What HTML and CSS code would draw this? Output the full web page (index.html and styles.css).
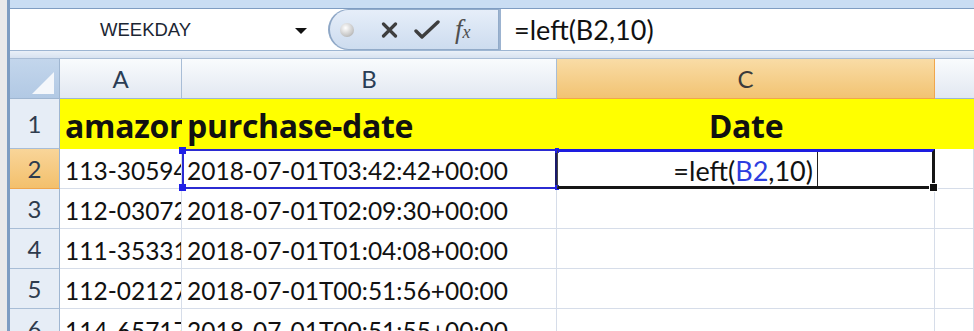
FILE: index.html
```html
<!DOCTYPE HTML>
<html>
<head>
    <title>Book1 - left(B2,10)</title>
    <link rel="stylesheet" href="styles.css">
</head>
<body>
<div class="window">
    <div class="ribbon-edge"></div>

    <div class="formula-bar">
        <div class="name-box">
            <span class="name-text">WEEKDAY</span>
            <span class="name-arrow"></span>
        </div>
        <div class="fx-buttons">
            <span class="expand-dot"></span>
            <svg class="fx-icon" width="17" height="16" viewBox="0 0 17 16">
                <path d="M2.5 2 L14.5 14 M14.5 2 L2.5 14" stroke="#3e3e3e" stroke-width="3.2" stroke-linecap="round"/>
            </svg>
            <svg class="fx-icon" width="26" height="20" viewBox="0 0 26 20">
                <path d="M2 11 L8 17 L24 2" stroke="#3e3e3e" stroke-width="3.4" fill="none" stroke-linejoin="round" stroke-linecap="round"/>
            </svg>
            <span class="fx-label">f<span class="fx-x">x</span></span>
        </div>
        <div class="formula-input">=left(B2,10)</div>
    </div>

    <div class="band"></div>

    <div class="sheet">
        <div class="corner"><span class="corner-tri"></span></div>
        <div class="col-head">A</div>
        <div class="col-head">B</div>
        <div class="col-head col-active">C</div>
        <div class="col-head col-last"></div>

        <div class="row-head">1</div>
        <div class="cell head-cell">amazon-order-id</div>
        <div class="cell head-cell">purchase-date</div>
        <div class="cell head-cell center">Date</div>
        <div class="cell head-cell"></div>

        <div class="row-head row-active">2</div>
        <div class="cell">113-3059478-4215451</div>
        <div class="cell ref-cell">
            2018-07-01T03:42:42+00:00
            <span class="handle h-tl"></span>
            <span class="handle h-bl"></span>
            <span class="handle h-tr"></span>
            <span class="handle h-br"></span>
        </div>
        <div class="cell edit-cell">
            <div class="edit-text">=left(<span class="ref-b2">B2</span>,10)</div>
            <span class="fill-handle"></span>
        </div>
        <div class="cell"></div>

        <div class="row-head">3</div>
        <div class="cell">112-0307254-7715409</div>
        <div class="cell">2018-07-01T02:09:30+00:00</div>
        <div class="cell"></div>
        <div class="cell"></div>

        <div class="row-head">4</div>
        <div class="cell">111-3533115-3351415</div>
        <div class="cell">2018-07-01T01:04:08+00:00</div>
        <div class="cell"></div>
        <div class="cell"></div>

        <div class="row-head">5</div>
        <div class="cell">112-0212714-6271833</div>
        <div class="cell">2018-07-01T00:51:56+00:00</div>
        <div class="cell"></div>
        <div class="cell"></div>

        <div class="row-head">6</div>
        <div class="cell">114-6571739-0213054</div>
        <div class="cell">2018-07-01T00:51:55+00:00</div>
        <div class="cell"></div>
        <div class="cell"></div>
    </div>
</div>
</body>
</html>
```

FILE: styles.css
```css
body{
    margin:0;
    background-color:#e8e9eb;
    overflow:hidden;
    height:331px;
}

.window{
    margin-left:7px;
    border-left:3px solid #7c9cc2;
    background-color:white;
    height:331px;
    overflow:hidden;
}

.ribbon-edge{
    height:8px;
    background-color:#c9ddf3;
}

/* formula bar */

.formula-bar{
    display:flex;
    height:41px;
    border-top:1px solid #7f9dc2;
    border-bottom:1px solid #9db5d2;
    background-color:white;
}

.name-box{
    width:318px;
    display:flex;
    align-items:center;
    font-family:"Liberation Sans", Arial, sans-serif;
    font-size:18.5px;
    color:#1c2633;
}

.name-text{
    margin-left:90px;
}

.name-arrow{
    margin-left:104px;
    width:0;
    height:0;
    border-left:6px solid transparent;
    border-right:6px solid transparent;
    border-top:6px solid #111;
    margin-top:2px;
}

.fx-buttons{
    width:168px;
    display:flex;
    align-items:center;
    border:1px solid #92abc9;
    border-left:2px solid #8ea7c6;
    border-radius:21px 0 0 21px;
    background:linear-gradient(#e6eef9, #cddcef);
}

.expand-dot{
    width:14px;
    height:14px;
    border-radius:50%;
    margin-left:10px;
    background:radial-gradient(circle at 40% 35%, #ffffff, #c9c9c9 60%, #9c9c9c);
}

.fx-icon{
    margin-left:27px;
}

.fx-icon + .fx-icon{
    margin-left:16px;
}

.fx-label{
    margin-left:15px;
    font-family:"Liberation Serif", "Times New Roman", serif;
    font-style:italic;
    font-size:27px;
    color:#4f4f4f;
}

.fx-x{
    font-size:18px;
}

.formula-input{
    flex:1;
    border-left:2px solid #9cb3d0;
    padding-left:13px;
    display:flex;
    align-items:center;
    font-family:Lato, "Open Sans", sans-serif;
    font-size:27px;
    color:#111;
}

.band{
    height:7px;
    background:linear-gradient(#eaf0f8, #d7e2f0);
    border-bottom:1px solid #a9bdd6;
}

/* sheet */

.sheet{
    display:grid;
    grid-template-columns:50px 122px 375px 378px 1fr;
    grid-template-rows:40px 50px 40px 40px 40px 40px 40px;
    font-family:Lato, "Open Sans", sans-serif;
}

.corner{
    background:linear-gradient(#c3d6ec, #b2c9e4);
    border-right:1px solid #9fb6d1;
    border-bottom:1px solid #9fb6d1;
    position:relative;
}

.corner-tri{
    position:absolute;
    right:5px;
    bottom:4px;
    width:0;
    height:0;
    border-left:22px solid transparent;
    border-bottom:22px solid #f4f7fb;
}

.col-head{
    display:flex;
    align-items:center;
    justify-content:center;
    background:linear-gradient(#f9fbfd, #e2e8f1);
    border-right:1px solid #a8bdd6;
    border-bottom:1px solid #9fb6d1;
    font-size:24px;
    color:#2a3d55;
}

.col-active{
    background:linear-gradient(#f9dca6, #f2c372);
    border-right:1px solid #f0a64c;
    border-bottom:1px solid #f0a64c;
    color:#3b3b3b;
}

.col-last{
    border-right:none;
}

.row-head{
    display:flex;
    align-items:center;
    justify-content:center;
    background-color:#e6edf6;
    border-right:1px solid #9fb6d1;
    border-bottom:1px solid #a8bdd6;
    font-size:24px;
    color:#2e3b4d;
}

.row-active{
    background:linear-gradient(#f9d599, #f3c06c);
    border-bottom:1px solid #f0a64c;
}

.cell{
    display:flex;
    align-items:center;
    padding:3px 0 0 5px;
    border-right:1px solid #d6dde9;
    border-bottom:1px solid #d6dde9;
    white-space:nowrap;
    overflow:hidden;
    font-size:24.5px;
    color:#111;
    box-sizing:border-box;
}

.head-cell{
    background-color:#ffff00;
    border-right:none;
    border-bottom:none;
    font-family:"Open Sans", Lato, sans-serif;
    font-weight:bold;
    font-size:32px;
    letter-spacing:-0.3px;
    padding-top:2px;
}

.center{
    justify-content:center;
    padding-left:0;
}

/* B2 reference box */

.ref-cell{
    position:relative;
    overflow:visible;
    border:2px solid #2b2bd2;
    border-right:2px solid #1a1a6a;
    padding-left:3px;
}

.handle{
    position:absolute;
    width:7px;
    height:7px;
    background-color:#1f1fe8;
}

.h-tl{ left:-5px; top:-4px; }
.h-bl{ left:-5px; bottom:-4px; }
.h-tr{ right:-4px; top:-3px; width:4px; height:5px; }
.h-br{ right:-4px; bottom:-3px; width:4px; height:5px; }

/* C2 edit cell */

.edit-cell{
    position:relative;
    overflow:visible;
    padding:0;
    border-top:3px solid #1d1de0;
    border-bottom:3px solid #161616;
    border-right:3px solid #161616;
    border-left:1px solid #444;
    align-items:stretch;
}

.edit-text{
    width:260px;
    border-right:1px solid #222;
    display:flex;
    align-items:center;
    justify-content:flex-end;
    padding:2px 4px 0 0;
    box-sizing:border-box;
    font-size:27px;
}

.ref-b2{
    color:#2d3ee0;
}

.fill-handle{
    position:absolute;
    right:-6px;
    bottom:-6px;
    width:7px;
    height:7px;
    background-color:#111;
    border:1px solid white;
}
```
